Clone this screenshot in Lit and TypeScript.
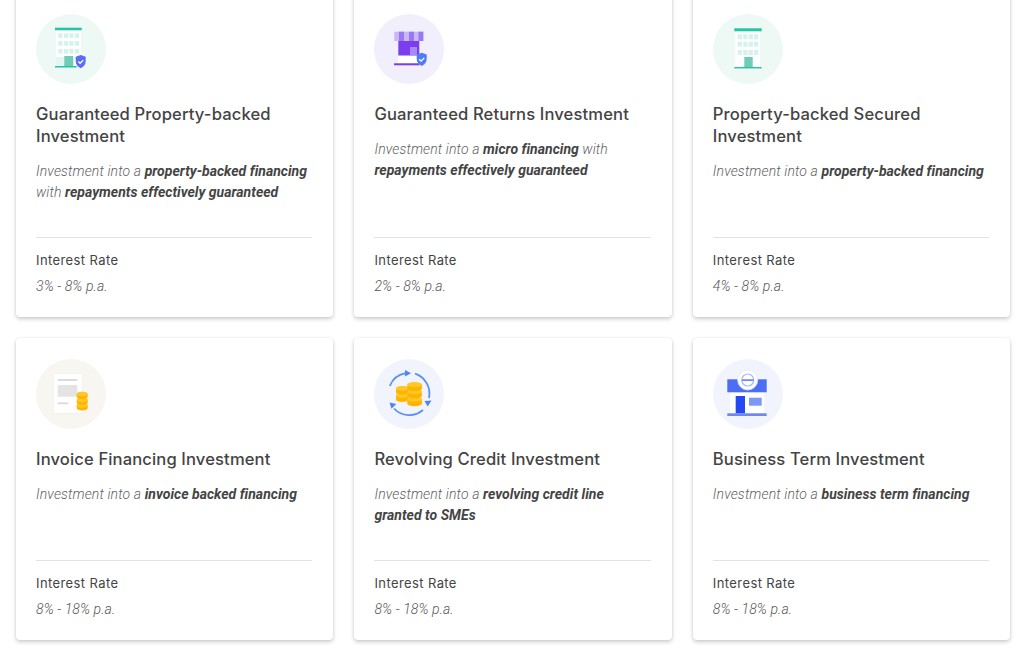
import { LitElement, html, css, svg } from "lit";
import { customElement } from "lit/decorators.js";

const shield = (cx: number, cy: number, fill = "#5b6cf5") => svg`
  <path d="M${cx} ${cy - 6.5}l5 1.8v4.2c0 3.6-2.2 6-5 7.3c-2.8-1.3-5-3.7-5-7.3v-4.2z" fill="${fill}"/>
  <path d="M${cx - 2.4} ${cy}l1.8 1.8l3.2-3.2" fill="none" stroke="#fff" stroke-width="1.3"/>`;

const windows = (xs: number[], ys: number[], w: number, h: number) =>
  ys.map((y) => xs.map((x) => svg`<rect x="${x}" y="${y}" width="${w}" height="${h}" fill="#d5f2ec"/>`));

const coin = (x: number, y: number, w: number, h: number) => svg`
  <rect x="${x}" y="${y}" width="${w}" height="${h}" rx="${w / 2}" ry="2.6" fill="#ffb400"/>
  <ellipse cx="${x + w / 2}" cy="${y + 2.4}" rx="${w / 2}" ry="2.4" fill="#ffc824"/>`;

const icons = [
  svg`<rect x="20" y="16" width="25" height="36" fill="#fff"/>
    <rect x="20" y="43" width="9" height="9" fill="#e3f6f1"/>
    <rect x="19" y="13.7" width="26.7" height="2.6" fill="#25c4a4"/>
    ${windows([22.3, 28, 33.3, 38.8], [19.3, 27, 35], 4.2, 4.6)}
    <rect x="28.3" y="42" width="9" height="10.3" fill="#6fcdb7"/>
    <rect x="19" y="52" width="21.7" height="1.5" fill="#25c4a4"/>
    ${shield(44.7, 47.5)}`,
  svg`<rect x="24" y="27" width="21.5" height="22" fill="#fff"/>
    <rect x="24.3" y="27" width="21" height="14.5" fill="#7a3df0"/>
    <rect x="36" y="33" width="7" height="8" fill="#a88af5"/>
    <rect x="20.3" y="17.7" width="29" height="9.3" fill="#c9b8f8"/>
    <rect x="25" y="17.7" width="5" height="9.3" fill="#9a78f3"/>
    <rect x="35" y="17.7" width="5" height="9.3" fill="#9a78f3"/>
    <rect x="44.5" y="17.7" width="4.8" height="9.3" fill="#9a78f3"/>
    <rect x="20" y="49.3" width="25.3" height="2" fill="#7a3df0"/>
    ${shield(47.7, 45.3, "#4f7cf5")}`,
  svg`<rect x="22.3" y="17" width="24.7" height="36" fill="#fff"/>
    <rect x="21.3" y="14.3" width="27.4" height="3" fill="#25c4a4"/>
    ${windows([24.7, 30.3, 35.7, 41], [20.3, 27.7, 36], 4.2, 5)}
    <rect x="31.3" y="43" width="8.4" height="10.3" fill="#6fcdb7"/>
    <rect x="21.3" y="53" width="27.4" height="1.4" fill="#25c4a4"/>`,
  svg`<rect x="17.3" y="14.3" width="29.4" height="40" fill="#fff" stroke="#eeece6" stroke-width=".6"/>
    <rect x="21.7" y="20" width="19.6" height="2" fill="#dcdcdc"/>
    <rect x="21.7" y="26" width="19.6" height="11.7" fill="#e4e4e4"/>
    <rect x="21.7" y="43.3" width="10.5" height="2" fill="#dcdcdc"/>
    ${coin(40.7, 44, 11, 7.5)}${coin(40.7, 38.5, 11, 7.5)}${coin(40.7, 32.7, 11, 7.5)}`,
  svg`<g fill="none" stroke="#5b8ff5" stroke-width="1.8">
      <path d="M15.8 27A21 21 0 0 1 32 14.2"/>
      <path d="M41 14.7A21 21 0 0 1 55 39"/>
      <path d="M49 51A21 21 0 0 1 20 49.5"/>
    </g>
    <g fill="#4f84f5">
      <path d="M31 11l6 3.3l-6 3.3z"/>
      <path d="M50.5 42l7-.5l-3.8 6z"/>
      <path d="M15.5 43.5l6.8 1.5l-4.8 4.8z"/>
    </g>
    ${coin(22, 34.2, 12.5, 8.8)}${coin(22, 27, 12.5, 8.8)}
    ${coin(33.3, 37.8, 14.6, 9.4)}${coin(33.3, 30.5, 14.6, 9)}${coin(33.3, 23.3, 14.6, 9)}`,
  svg`<rect x="17" y="33" width="34.3" height="21.5" fill="#fff"/>
    <rect x="14.3" y="20.3" width="39.4" height="13" fill="#4c6ef5"/>
    <circle cx="34.7" cy="21" r="10" fill="#fff" stroke="#e4e9fb" stroke-width=".8"/>
    <circle cx="34.7" cy="21" r="6" fill="none" stroke="#a9b8f5" stroke-width="1.2"/>
    <rect x="29" y="20.4" width="11.4" height="1.4" fill="#4c6ef5"/>
    <rect x="22.7" y="37" width="9.3" height="17.4" fill="#2448f2"/>
    <rect x="36" y="38.7" width="12.7" height="8" fill="#7f97f6"/>
    <rect x="14.3" y="54.3" width="39.4" height="2.7" fill="#6d88f5"/>`,
];

const products = [
  { title: "Guaranteed Property-backed Investment", bg: "#eef8f4", desc: html`Investment into a <b>property-backed financing</b> with <b>repayments effectively guaranteed</b>`, rate: "3% - 8% p.a." },
  { title: "Guaranteed Returns Investment", bg: "#f1effc", desc: html`Investment into a <b>micro financing</b> with <b>repayments effectively guaranteed</b>`, rate: "2% - 8% p.a." },
  { title: "Property-backed Secured Investment", bg: "#eef8f4", desc: html`Investment into a <b>property-backed financing</b>`, rate: "4% - 8% p.a." },
  { title: "Invoice Financing Investment", bg: "#f8f6f0", desc: html`Investment into a <b>invoice backed financing</b>`, rate: "8% - 18% p.a." },
  { title: "Revolving Credit Investment", bg: "#f1f4fd", desc: html`Investment into a <b>revolving credit line granted to SMEs</b>`, rate: "8% - 18% p.a." },
  { title: "Business Term Investment", bg: "#f1f4fd", desc: html`Investment into a <b>business term financing</b>`, rate: "8% - 18% p.a." },
];

@customElement("app-root")
export class AppRoot extends LitElement {
  static styles = css`
    :host { display: block; height: 653px; overflow: hidden; background: #fff; }
    .grid {
      display: grid;
      grid-template-columns: repeat(3, 317.33px);
      gap: 21px 21.1px;
      padding: 0 0 0 16px;
      margin-top: -7px;
    }
    .card {
      display: flex;
      flex-direction: column;
      box-sizing: border-box;
      padding: 21px 21px 22px 20px;
      background: #fff;
      border-radius: 4px;
      box-shadow: 0 2px 4px rgba(0,0,0,.2), 0 0 2px rgba(0,0,0,.08);
    }
    .icon { width: 70px; height: 70px; display: block; filter: blur(.35px); }
    h3 {
      margin: 19px 0 0;
      font: 500 16.6px/22px Inter, "Liberation Sans", sans-serif;
      letter-spacing: .12px;
      color: #444;
    }
    p {
      margin: 14px 0 34px;
      font: italic 300 14px/21px Roboto, sans-serif;
      letter-spacing: .12px;
      color: #5f5f5f;
    }
    b { font-weight: 700; color: #444; letter-spacing: .03px; }
    .foot { margin-top: auto; border-top: 1px solid #e2e2e2; padding-top: 13px; }
    .label { font: 400 13px/18px Inter, sans-serif; letter-spacing: .4px; color: #444; }
    .rate { margin-top: 8px; font: italic 300 14px/18px Roboto, sans-serif; letter-spacing: .1px; color: #555; }
  `;

  render() {
    return html`<div class="grid">
      ${products.map((p, i) => html`<div class="card">
        <svg class="icon" viewBox="0 0 70 70"><circle cx="35" cy="35" r="35" fill="${p.bg}"/>${icons[i]}</svg>
        <h3>${p.title}</h3>
        <p>${p.desc}</p>
        <div class="foot">
          <div class="label">Interest Rate</div>
          <div class="rate">${p.rate}</div>
        </div>
      </div>`)}
    </div>`;
  }
}
